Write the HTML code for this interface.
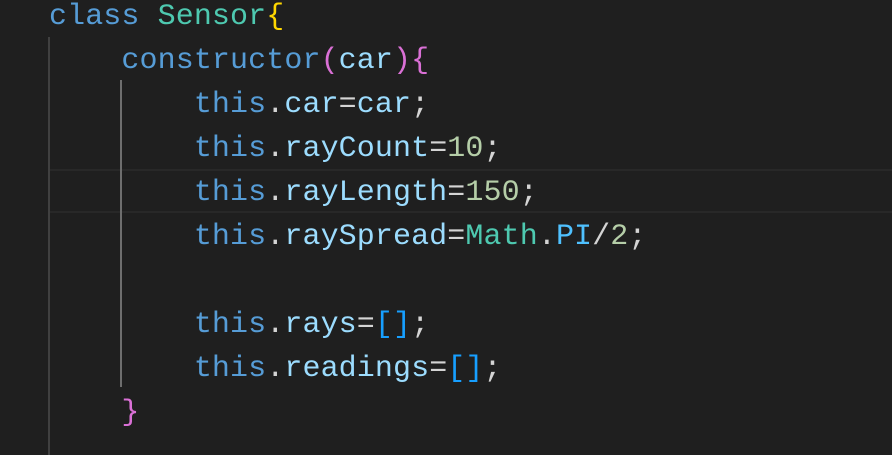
<!DOCTYPE html>
<html><head><meta charset="utf-8"><style>
html,body{margin:0;padding:0;background:#1f1f1f;width:892px;height:455px;overflow:hidden}
.code{position:absolute;left:49px;top:-5px;font-family:"Liberation Mono",monospace;font-size:30px;line-height:44px;white-space:pre;color:#d4d4d4;letter-spacing:0.1px}
.k{color:#569cd6}.t{color:#4ec9b0}.p{color:#9cdcfe}.n{color:#b5cea8}.y{color:#ffd700}.m{color:#da70d6}.b{color:#179fff}.c{color:#4fc1ff}.f{color:#dcdcaa}
.g1{position:absolute;left:48px;top:37px;width:2px;height:418px;background:#404040}
.g2{position:absolute;left:120px;top:80px;width:2px;height:307px;background:#6e6e6e}
.hl{position:absolute;left:50px;top:169px;width:842px;height:40px;border-top:2px solid #282828;border-bottom:2px solid #282828}
</style></head><body>
<div class="hl"></div>
<div class="g1"></div><div class="g2"></div>
<div class="code"><span class="k">class</span> <span class="t">Sensor</span><span class="y">{</span>
    <span class="k">constructor</span><span class="m">(</span><span class="p">car</span><span class="m">){</span>
        <span class="k">this</span>.<span class="p">car</span>=<span class="p">car</span>;
        <span class="k">this</span>.<span class="p">rayCount</span>=<span class="n">10</span>;
        <span class="k">this</span>.<span class="p">rayLength</span>=<span class="n">150</span>;
        <span class="k">this</span>.<span class="p">raySpread</span>=<span class="t">Math</span>.<span class="c">PI</span>/<span class="n">2</span>;

        <span class="k">this</span>.<span class="p">rays</span>=<span class="b">[]</span>;
        <span class="k">this</span>.<span class="p">readings</span>=<span class="b">[]</span>;
    <span class="m">}</span></div>
</body></html>
